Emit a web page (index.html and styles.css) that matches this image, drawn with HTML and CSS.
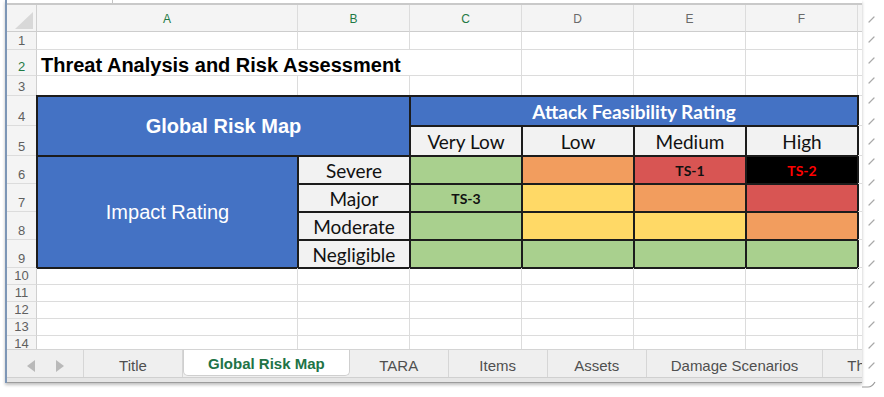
FILE: index.html
```html
<!DOCTYPE html>
<html lang="en">
<head>
<meta charset="UTF-8" />
<meta name="viewport" content="width=device-width, initial-scale=1" />
<title>Global Risk Map</title>
<link rel="stylesheet" href="styles.css">
</head>
<body>
<div class="page">
  <div class="window">
    <div class="formula-strip"><span class="name-box"></span></div>

    <div class="sheet">
      <!-- column letters -->
      <div class="row colhead">
        <div class="rh corner"><span class="corner-tri"></span></div>
        <div class="c a sel">A</div>
        <div class="c b sel">B</div>
        <div class="c b sel">C</div>
        <div class="c b">D</div>
        <div class="c b">E</div>
        <div class="c b">F</div>
        <div class="c x"></div>
      </div>

      <div class="row h18">
        <div class="rh">1</div>
        <div class="c a"></div><div class="c b"></div><div class="c b"></div>
        <div class="c b"></div><div class="c b"></div><div class="c b"></div><div class="c x"></div>
      </div>

      <div class="row h26">
        <div class="rh sel">2</div>
        <div class="c abc title">Threat Analysis and Risk Assessment</div>
        <div class="c b"></div><div class="c b"></div><div class="c b"></div><div class="c x"></div>
      </div>

      <div class="row h20">
        <div class="rh">3</div>
        <div class="c a"></div><div class="c b"></div><div class="c b"></div>
        <div class="c b"></div><div class="c b"></div><div class="c b"></div><div class="c x"></div>
      </div>

      <!-- rows 4 to 9: the risk map -->
      <div class="band">
        <div class="stack">
          <div class="rh h30">4</div>
          <div class="rh h30">5</div>
          <div class="rh h28">6</div>
          <div class="rh h28">7</div>
          <div class="rh h28">8</div>
          <div class="rh h28">9</div>
        </div>

        <div class="risk">
          <div class="blue gmap">Global Risk Map</div>
          <div class="blue afr">Attack Feasibility Rating</div>
          <div class="blue impact">Impact Rating</div>

          <div class="lvl">Very Low</div>
          <div class="lvl">Low</div>
          <div class="lvl">Medium</div>
          <div class="lvl">High</div>

          <div class="lvl">Severe</div>
          <div class="green"></div>
          <div class="orange"></div>
          <div class="red ts">TS-1</div>
          <div class="black ts">TS-2</div>

          <div class="lvl">Major</div>
          <div class="green ts">TS-3</div>
          <div class="yellow"></div>
          <div class="orange"></div>
          <div class="red"></div>

          <div class="lvl">Moderate</div>
          <div class="green"></div>
          <div class="yellow"></div>
          <div class="yellow"></div>
          <div class="orange"></div>

          <div class="lvl">Negligible</div>
          <div class="green"></div>
          <div class="green"></div>
          <div class="green"></div>
          <div class="green"></div>
        </div>

        <div class="stack">
          <div class="c x h30"></div>
          <div class="c x h30"></div>
          <div class="c x h28"></div>
          <div class="c x h28"></div>
          <div class="c x h28"></div>
          <div class="c x h28"></div>
        </div>
      </div>

      <div class="row h17">
        <div class="rh">10</div>
        <div class="c a"></div><div class="c b"></div><div class="c b"></div>
        <div class="c b"></div><div class="c b"></div><div class="c b"></div><div class="c x"></div>
      </div>
      <div class="row h17">
        <div class="rh">11</div>
        <div class="c a"></div><div class="c b"></div><div class="c b"></div>
        <div class="c b"></div><div class="c b"></div><div class="c b"></div><div class="c x"></div>
      </div>
      <div class="row h17">
        <div class="rh">12</div>
        <div class="c a"></div><div class="c b"></div><div class="c b"></div>
        <div class="c b"></div><div class="c b"></div><div class="c b"></div><div class="c x"></div>
      </div>
      <div class="row h17">
        <div class="rh">13</div>
        <div class="c a"></div><div class="c b"></div><div class="c b"></div>
        <div class="c b"></div><div class="c b"></div><div class="c b"></div><div class="c x"></div>
      </div>
      <div class="row h17">
        <div class="rh">14</div>
        <div class="c a"></div><div class="c b"></div><div class="c b"></div>
        <div class="c b"></div><div class="c b"></div><div class="c b"></div><div class="c x"></div>
      </div>
    </div>

    <!-- sheet tabs -->
    <div class="tabs">
      <div class="tab-nav"><span class="arrow left"></span><span class="arrow right"></span></div>
      <div class="tab">Title</div>
      <div class="tab active">Global Risk Map</div>
      <div class="tab">TARA</div>
      <div class="tab">Items</div>
      <div class="tab">Assets</div>
      <div class="tab">Damage Scenarios</div>
      <div class="tab last">Threat Scenarios</div>
    </div>
    <div class="frame-bottom"></div>
  </div>

  <!-- torn edge of the screenshot -->
  <svg class="tear" width="22" height="397" viewBox="0 0 22 397">
    <path d="M7 22 L12 17 M7 42 L12 37 M7 63 L12 58 M7 83 L12 78 M7 103 L12 98 M7 124 L12 119
             M7 144 L12 139 M7 164 L12 159 M7 185 L12 180 M7 205 L12 200 M7 225 L12 220 M7 246 L12 241
             M7 266 L12 261 M7 287 L12 282 M7 307 L12 302 M7 327 L12 322 M7 348 L12 343 M7 368 L12 363"
          stroke="#a9a9a9" stroke-width="1.2" fill="none" stroke-linecap="round"/>
    <path d="M0 387 L6 387 Q10 387 13 382" stroke="#9a9a9a" stroke-width="1.2" fill="none"/>
  </svg>
</div>
</body>
</html>
```

FILE: styles.css
```css
body {
  margin: 0;
  background: #fff;
  font-family: "Liberation Sans", Arial, sans-serif;
  color: #111;
}

.page {
  display: flex;
  align-items: flex-start;
}

.window {
  margin-left: 5px;
  width: 857px;
  box-sizing: border-box;
  border-left: 2px solid #7d96b6;
  box-shadow: 0 2px 3px rgba(0, 0, 0, 0.25);
  overflow: hidden;
}

.formula-strip {
  height: 3px;
  border-bottom: 2px solid #c9c9c9;
}

.name-box {
  display: block;
  margin-left: 105px;
  width: 1px;
  height: 3px;
  background: #c4c4c4;
}

/* grid */
.sheet {
  height: 344px;
  overflow: hidden;
}

.row {
  display: flex;
}

.h17 { height: 17px; }
.h18 { height: 18px; }
.h20 { height: 20px; }
.h26 { height: 26px; }
.h28 { height: 28px; }
.h30 { height: 30px; }

.c {
  flex: none;
  box-sizing: border-box;
  border-right: 1px solid #dcdcdc;
  border-bottom: 1px solid #dcdcdc;
}

.a { width: 261px; }
.b { width: 112px; }
.abc { width: 485px; }
.x { width: 4px; border-right: none; }

.rh {
  flex: none;
  width: 30px;
  box-sizing: border-box;
  background: #f4f4f4;
  border-right: 1px solid #cfcfcf;
  border-bottom: 1px solid #dcdcdc;
  color: #5f5f5f;
  font-size: 13px;
  line-height: 13px;
  display: flex;
  align-items: flex-end;
  justify-content: center;
  padding-bottom: 2px;
}

.rh.sel { color: #1f7a45; }

.colhead {
  height: 27px;
  background: #f4f4f4;
}

.colhead .c {
  display: flex;
  align-items: center;
  justify-content: center;
  font-size: 12px;
  color: #6a6a6a;
  border-bottom-color: #cdcdcd;
  padding-top: 2px;
}

.colhead .sel { color: #1f7a45; }

.corner {
  align-items: flex-end;
  justify-content: flex-end;
  padding: 0 3px 2px 0;
  border-bottom-color: #cdcdcd;
}

.corner-tri {
  width: 18px;
  height: 17px;
  background: #d8d8d8;
  clip-path: polygon(100% 0, 100% 100%, 0 100%);
}

.title {
  display: flex;
  align-items: center;
  padding: 5px 0 0 4px;
  font-size: 20px;
  font-weight: bold;
  color: #000;
  white-space: nowrap;
}

/* risk map */
.band {
  display: flex;
  height: 172px;
}

.stack {
  display: flex;
  flex-direction: column;
}

.risk {
  display: grid;
  grid-template-columns: 261px repeat(5, 112px);
  grid-template-rows: 30px 30px repeat(4, 28px);
  outline: 1px solid #1c1c1c;
  font-family: Lato, "Open Sans", sans-serif;
}

.risk > div {
  box-sizing: border-box;
  border: 1px solid #1c1c1c;
  display: flex;
  align-items: center;
  justify-content: center;
}

.blue {
  background: #4472c4;
  color: #fff;
}

.gmap {
  grid-column: 1 / 3;
  grid-row: 1 / 3;
  font-family: "Liberation Sans", Arial, sans-serif;
  font-size: 20px;
  font-weight: bold;
}

.afr {
  grid-column: 3 / 7;
  grid-row: 1;
  font-size: 19px;
  font-weight: bold;
}

.impact {
  grid-column: 1;
  grid-row: 3 / 7;
  font-family: "Liberation Sans", Arial, sans-serif;
  font-size: 20px;
}

.lvl {
  background: #f2f2f2;
  font-size: 19px;
  color: #111;
}

.green { background: #a9d08e; }
.orange { background: #f29d5e; }
.red { background: #d85553; }
.yellow { background: #ffd966; }
.black { background: #000; color: #ff0000; }

.ts {
  font-size: 14px;
  font-weight: bold;
}

/* sheet tabs */
.tabs {
  display: flex;
  height: 29px;
  box-sizing: border-box;
  background: #efefef;
  border-top: 1px solid #d4d4d4;
  border-bottom: 1px solid #d0d0d0;
  font-size: 15px;
  color: #4f4f4f;
  overflow: hidden;
}

.tab-nav {
  flex: none;
  width: 76px;
  display: flex;
  align-items: center;
  justify-content: center;
  gap: 21px;
  padding-top: 4px;
  border-right: 1px solid #d6d6d6;
}

.arrow {
  width: 0;
  height: 0;
  border-top: 6px solid transparent;
  border-bottom: 6px solid transparent;
}

.arrow.left { border-right: 8px solid #b9b9b9; }
.arrow.right { border-left: 8px solid #b9b9b9; }

.tab {
  flex: none;
  min-width: 99px;
  padding: 3px 24px 0;
  box-sizing: border-box;
  display: flex;
  align-items: center;
  justify-content: center;
  white-space: nowrap;
  border-right: 1px solid #d6d6d6;
}

.tab.last {
  flex: 1;
  min-width: 0;
  justify-content: flex-start;
  overflow: hidden;
}

.tab.active {
  margin-top: -1px;
  background: #fff;
  color: #217346;
  font-weight: bold;
  border: 1px solid #cfcfcf;
  border-top: none;
  border-radius: 0 0 5px 5px;
  margin-bottom: 1px;
}

.frame-bottom {
  height: 4px;
  background: #e6e6e6;
  border-bottom: 1px solid #9c9c9c;
}

.tear {
  flex: none;
}
```
